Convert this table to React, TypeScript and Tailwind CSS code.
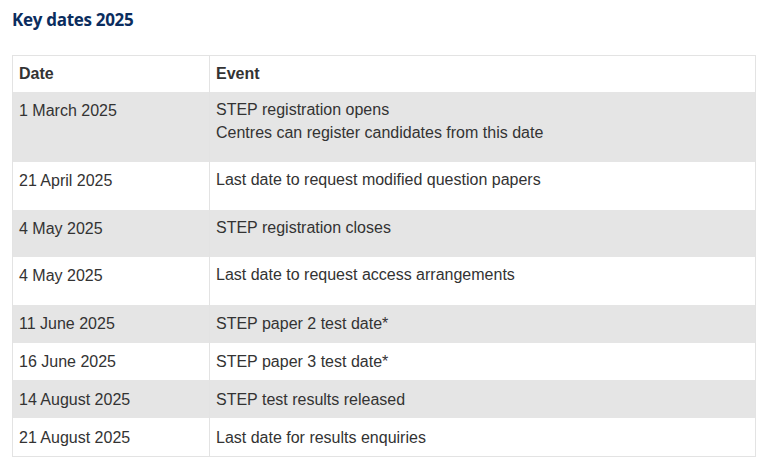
import React from "react";

const rows: { date: string; event: string[]; h: string; gray: boolean; pt: string }[] = [
  { date: "1 March 2025", event: ["STEP registration opens", "Centres can register candidates from this date"], h: "h-[70px]", gray: true, pt: "pt-[6px]" },
  { date: "21 April 2025", event: ["Last date to request modified question papers"], h: "h-[48px]", gray: false, pt: "pt-[6px]" },
  { date: "4 May 2025", event: ["STEP registration closes"], h: "h-[47px]", gray: true, pt: "pt-[6px]" },
  { date: "4 May 2025", event: ["Last date to request access arrangements"], h: "h-[48px]", gray: false, pt: "pt-[6px]" },
  { date: "11 June 2025", event: ["STEP paper 2 test date*"], h: "h-[38px]", gray: true, pt: "pt-[7px]" },
  { date: "16 June 2025", event: ["STEP paper 3 test date*"], h: "h-[37px]", gray: false, pt: "pt-[7px]" },
  { date: "14 August 2025", event: ["STEP test results released"], h: "h-[38px]", gray: true, pt: "pt-[8px]" },
  { date: "21 August 2025", event: ["Last date for results enquiries"], h: "h-[38px]", gray: false, pt: "pt-[8px]" },
];

export default function App() {
  return (
    <div className="w-[772px] h-[470px] bg-white pl-[12px] pr-[16px] pt-[8px]">
      <h2 className="text-[17px] font-bold leading-[24px] text-[#0b2d5e] tracking-[-0.3px]" style={{ fontFamily: '"Open Sans", sans-serif' }}>
        Key dates 2025
      </h2>
      <div
        className="mt-[23px] border border-[#e3e3e3] text-[16px] leading-[23px] text-[#333333]"
        style={{ fontFamily: '"Liberation Sans", Arial, sans-serif' }}
      >
        <div className="grid grid-cols-[197px_1fr] h-[36px] bg-white font-bold">
          <div className="border-r border-[#e3e3e3] pl-[6px] pt-[6px]">Date</div>
          <div className="pl-[6px] pt-[6px]">Event</div>
        </div>
        {rows.map((r, i) => (
          <div key={i} className={`grid grid-cols-[197px_1fr] ${r.h} ${r.gray ? "bg-[#e5e5e5]" : "bg-white"}`}>
            <div className={`border-r border-[#e3e3e3] pl-[6px] ${i < 4 ? "pt-[7px]" : r.pt}`}>{r.date}</div>
            <div className={`pl-[6px] ${r.pt}`}>
              {r.event.map((e, j) => (
                <div key={j}>{e}</div>
              ))}
            </div>
          </div>
        ))}
      </div>
    </div>
  );
}
